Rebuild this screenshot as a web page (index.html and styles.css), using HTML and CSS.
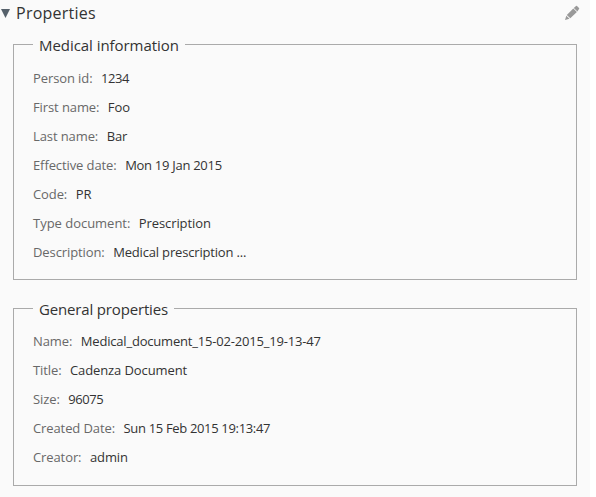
FILE: index.html
```html
<!DOCTYPE html>
<html lang="en">
<head>
<meta charset="utf-8">
<title>Properties</title>
<link rel="stylesheet" href="styles.css">
</head>
<body>
<main class="panel">
<header class="panel-head">
<svg class="twister" viewBox="0 0 10 9"><path d="M1 0h9L5.500 9z"/></svg>
<h2 class="panel-title">Properties</h2>
<svg class="edit" viewBox="0 0 16 16"><path d="M1 15l1.300-4.300 3.200 3.100zM2.800 10L9.300 3.600l3.600 3.400L6.300 13.300zM9.800 3.100l2.200-2q.5-.5 1 0l2 2q.5.500 0 1L13.400 6.500z"/></svg>
</header>
<fieldset class="group medical">
<legend>Medical information</legend>
<dl>
<div class="row"><dt>Person id:</dt><dd class="digits">1234</dd></div>
<div class="row"><dt>First name:</dt><dd>Foo</dd></div>
<div class="row"><dt>Last name:</dt><dd>Bar</dd></div>
<div class="row"><dt>Effective date:</dt><dd class="date">Mon 19 Jan 2015</dd></div>
<div class="row"><dt>Code:</dt><dd>PR</dd></div>
<div class="row"><dt class="wide">Type document:</dt><dd>Prescription</dd></div>
<div class="row"><dt>Description:</dt><dd class="sentence">Medical prescription ...</dd></div>
</dl>
</fieldset>
<fieldset class="group general">
<legend>General properties</legend>
<dl>
<div class="row"><dt>Name:</dt><dd class="filename">Medical_document_15-02-2015_19-13-47</dd></div>
<div class="row"><dt>Title:</dt><dd>Cadenza Document</dd></div>
<div class="row"><dt>Size:</dt><dd class="digits">96075</dd></div>
<div class="row"><dt>Created Date:</dt><dd class="timestamp">Sun 15 Feb 2015 19:13:47</dd></div>
<div class="row"><dt>Creator:</dt><dd>admin</dd></div>
</dl>
</fieldset>
</main>
</body>
</html>
```
FILE: styles.css
```css
body {
  margin: 0;
  background: #fff;
  color: #333;
  font: 13px/19px "Open Sans", sans-serif;
}
.panel { width: 590px; height: 497px; overflow: hidden; background: #fafafa; }
.panel-head { display: flex; align-items: center; height: 26px; }
.twister { width: 10px; height: 9px; margin-right: 6px; fill: #56616b; }
.panel-title { margin: 0; font-size: 16px; font-weight: 400; line-height: 26px; letter-spacing: .25px; }
.edit { width: 16px; height: 16px; margin-left: auto; margin-right: 10px; fill: #999; }
.group {
  margin: 7px 13px 17px;
  padding: 9px 19px 12px;
  border: 1px solid #aaa;
}
.general { padding-top: 8px; padding-bottom: 13px; }
.group legend { padding: 2px 6px 0; font-size: 15px; line-height: 20px; letter-spacing: -.05px; }
.general legend { letter-spacing: -.16px; }
dl { margin: 0; }
.row { display: flex; height: 29px; align-items: center; gap: 8.500px; }
dt { color: #686868; letter-spacing: -.1px; }
.wide { letter-spacing: -.02px; }
dd { margin: 0; letter-spacing: -.1px; }
.digits { letter-spacing: -.43px; }
.date { letter-spacing: -.28px; }
.sentence { letter-spacing: -.17px; }
.filename { letter-spacing: -.19px; }
.timestamp { letter-spacing: -.33px; }
```
